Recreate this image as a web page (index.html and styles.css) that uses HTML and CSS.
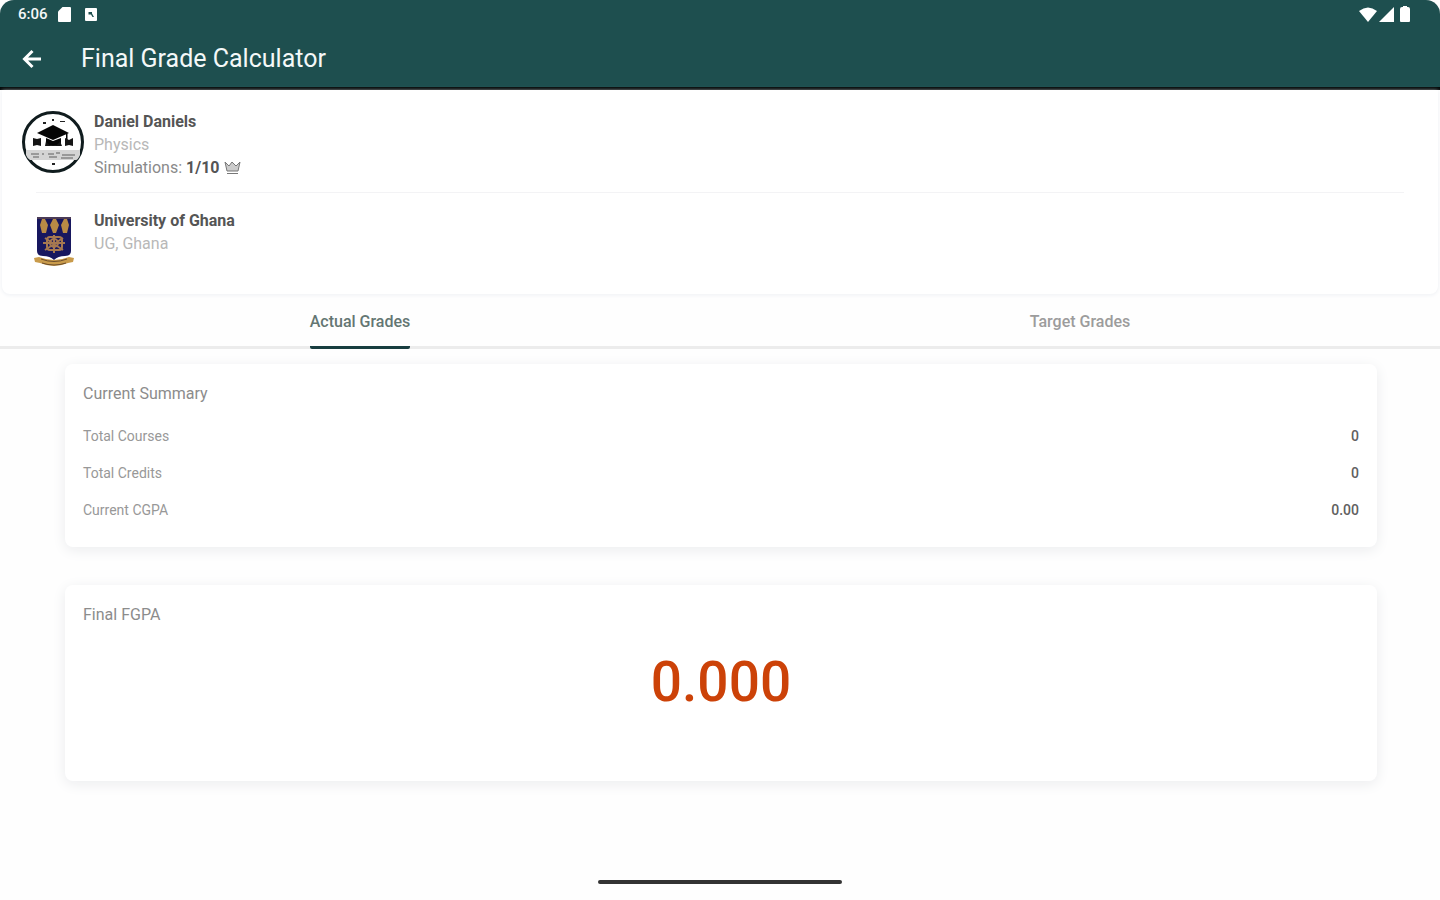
FILE: index.html
```html
<!DOCTYPE html>
<html lang="en">
<head>
<meta charset="utf-8">
<meta name="viewport" content="width=device-width, initial-scale=1">
<title>Final Grade Calculator</title>
<link rel="stylesheet" href="styles.css">
</head>
<body>
<div class="screen">
  <header class="top">
    <div class="status">
      <span class="clock">6:06</span>
      <svg class="status-icon sd" viewBox="0 0 13 15" width="13" height="15" aria-hidden="true"><path d="M4.500 0H12a1 1 0 0 1 1 1v13a1 1 0 0 1-1 1H1a1 1 0 0 1-1-1V4.500z"/></svg>
      <svg class="status-icon" viewBox="0 0 12 13" width="12" height="13" aria-hidden="true"><rect width="12" height="13" rx="1"/><path class="cut" d="M3.500 4h3.500v1.500l2 3.500H7.500L6 6.500H3.500z"/></svg>
      <span class="status-right">
        <svg class="status-icon" viewBox="0 0 18 15" width="18" height="15" aria-hidden="true"><path d="M0 4Q9-3 18 4L9 15z"/></svg>
        <svg class="status-icon" viewBox="0 0 15 15" width="15" height="15" aria-hidden="true"><path d="M15 0v15H0z"/></svg>
        <svg class="status-icon battery" viewBox="0 0 10 16" width="10" height="16" aria-hidden="true"><path d="M3 0h4v1h1a2 2 0 0 1 2 2v12a1 1 0 0 1-1 1H1a1 1 0 0 1-1-1V3a2 2 0 0 1 2-2h1z"/></svg>
      </span>
    </div>
    <div class="appbar">
      <button class="back" type="button" aria-label="Back"><svg viewBox="0 0 20 20" width="20" height="20"><path d="M19 10H3M10.500 2L2.500 10l8 8"/></svg></button>
      <h1>Final Grade Calculator</h1>
    </div>
  </header>
  <main>
    <section class="profile">
      <div class="person">
        <svg class="avatar" viewBox="0 0 64 64" width="64" height="64" role="img" aria-label="Graduation cap badge">
          <circle cx="32" cy="32" r="29.500" fill="#fff" stroke="#101c1e" stroke-width="3"/>
          <path d="M32 15L48 23 32 30 16 23zM25 28l7 3 8-3v6q-8 4-15 0zM45 23h1.500v8H45z" fill="#050505"/>
          <path d="M12 28l4 1 4-1v8l-4-1-4 1zM44 28l4 2 4-2v8l-4-1-4 1zM25 31q2 5 7 4 5 1 7-4l2 5H24z" fill="#151515"/>
          <path d="M5 40h54v5q-2 5-4 5H9q-3-2-4-5z" fill="#d4d4d4"/>
          <path d="M10 44h8M21 44h2M27 44h6M35 43h4M41 45h13M12 47h6M28 47h8M40 48h12" stroke="#999" stroke-width="2"/>
          <path d="M22 12h3v2h-3zM31 9h2v2h-2zM39 11h5v1h-5zM31 53h3v2h-3z" fill="#222"/>
        </svg>
        <div class="lines">
          <strong class="name">Daniel Daniels</strong>
          <span class="muted">Physics</span>
          <span class="sims">Simulations: <b>1/10</b><svg viewBox="0 0 17 14" width="17" height="14" aria-hidden="true"><path d="M1 1l4 4 3-4 4 4 4-4-2 9H3zM3 12.500h11"/></svg></span>
        </div>
      </div>
      <div class="school">
        <svg class="crest" viewBox="0 0 42 52" width="42" height="52" role="img" aria-label="University crest">
          <path d="M4 1h34v34q0 5-6 5-7 0-11 4-4-4-11-4-6 0-6-5z" fill="#17175f"/>
          <path d="M4 1h34v2H4z" fill="#4b3b57"/>
          <g fill="#b98b45"><path d="M9 3h3l3 6-2 8H9L7 9zM20 3h3l3 6-3 8h-3l-3-8zM31 3h3l2 6-2 8h-4l-2-8z"/></g>
          <g fill="none" stroke="#a57850" stroke-width="2"><rect x="14" y="21" width="15" height="13" rx="3"/><circle cx="21" cy="27" r="4"/><path d="M10 27h22M21 19v18M12 22l18 12M12 34l18-12"/></g>
          <path d="M1 42l5-1q15 6 30 0l5 1-1 4-5 1q-14 6-28 0l-5-1z" fill="#c99b4b"/>
          <path d="M8 43q13 5 26 0M9 47q12 4 24 0" fill="none" stroke="#6b4c2a"/>
        </svg>
        <div class="lines">
          <strong class="name">University of Ghana</strong>
          <span class="muted">UG, Ghana</span>
        </div>
      </div>
    </section>
    <nav class="tabs" role="tablist">
      <button type="button" role="tab" aria-selected="true" class="tab active"><span>Actual Grades</span></button>
      <button type="button" role="tab" aria-selected="false" class="tab"><span>Target Grades</span></button>
    </nav>
    <div class="cards">
      <section class="card">
        <h2>Current Summary</h2>
        <dl>
          <div><dt>Total Courses</dt><dd>0</dd></div>
          <div><dt>Total Credits</dt><dd>0</dd></div>
          <div><dt>Current CGPA</dt><dd>0.00</dd></div>
        </dl>
      </section>
      <section class="card final">
        <h2>Final FGPA</h2>
        <p class="score">0.000</p>
      </section>
    </div>
  </main>
  <footer class="gesture"><div class="handle"></div></footer>
</div>
</body>
</html>
```
FILE: styles.css
```css
* { box-sizing: border-box; }
body {
  margin: 0;
  background: #fff;
  color: #444;
  font-family: Roboto, "Liberation Sans", sans-serif;
  font-size: 16px;
}
h1, h2, p, dl, dd { margin: 0; }
button { border: 0; background: none; font: inherit; padding: 0; }
svg { display: block; flex: none; }
.screen { min-height: 100vh; display: flex; flex-direction: column; background: #fefefe; }
.top {
  background: #1e4f4f;
  border-bottom: 3px solid #020808;
  color: #f4f8f8;
  border-radius: 14px 14px 0 0;
}
.status { display: flex; align-items: center; height: 28px; padding: 0 30px 0 18px; }
.clock { font-size: 15px; font-weight: 500; margin-right: 10px; }
.status-icon { fill: #fff; }
.sd { margin-right: 14px; }
.cut { fill: #1e4f4f; }
.status-right { display: flex; align-items: center; gap: 2px; margin-left: auto; }
.battery { margin-left: 4px; }
.appbar { display: flex; align-items: center; padding: 15px 22px 12px; }
.back { width: 20px; margin-right: 39px; }
.back svg { fill: none; stroke: #fff; stroke-width: 3; }
h1 { font-size: 25px; line-height: 32px; font-weight: 400; }
.profile {
  margin: 0 2px;
  padding: 20px 20px 26px;
  background: #fff;
  border-radius: 0 0 8px 8px;
  box-shadow: 0 1px 4px #eef0f4;
}
.person, .school { display: flex; }
.person { gap: 9px; padding-bottom: 13px; margin-left: -1px; }
.school { border-top: 1px solid #f3f3f5; margin: 0 14px; padding-top: 16px; gap: 19px; }
.crest { margin: 7px 0 0 -3px; }
.lines { display: flex; flex-direction: column; line-height: 23px; font-size: 16px; }
.name { font-weight: 700; color: #555; }
.muted { color: #b8b8b8; }
.sims { display: flex; align-items: center; color: #8a8a8a; white-space: pre; }
.sims b { font-weight: 700; color: #555; }
.sims svg { margin-left: 4px; fill: #ccc; stroke: #777; }
.tabs { display: grid; grid-template-columns: 1fr 1fr; height: 51px; margin-top: 4px; border-bottom: 3px solid #ececec; }
.tab { display: flex; justify-content: center; color: #9c9c9c; font-size: 16px; font-weight: 500; }
.tab span { height: 51px; line-height: 47px; }
.tab.active span { color: #647673; border-bottom: 3px solid #183e40; border-radius: 2px; }
.cards { display: grid; gap: 38px; padding: 15px 63px 0 65px; }
.card { padding: 18px; border-radius: 8px; background: #fff; box-shadow: 0 3px 14px #ebecee; }
h2 { font-size: 16px; line-height: 23px; font-weight: 400; color: #8c8c8c; }
dl { padding-top: 13px; }
dl div { display: flex; justify-content: space-between; line-height: 37px; font-size: 14px; }
dt { color: #989898; }
dd { font-weight: 500; color: #606060; }
.final { min-height: 196px; }
.score { margin-top: 21px; text-align: center; color: #cc4208; font-size: 55px; line-height: 70px; font-weight: 500; }
.gesture { margin-top: auto; padding-bottom: 16px; }
.handle { width: 17%; height: 4px; margin: 0 auto; background: #333; border-radius: 2px; }
```
